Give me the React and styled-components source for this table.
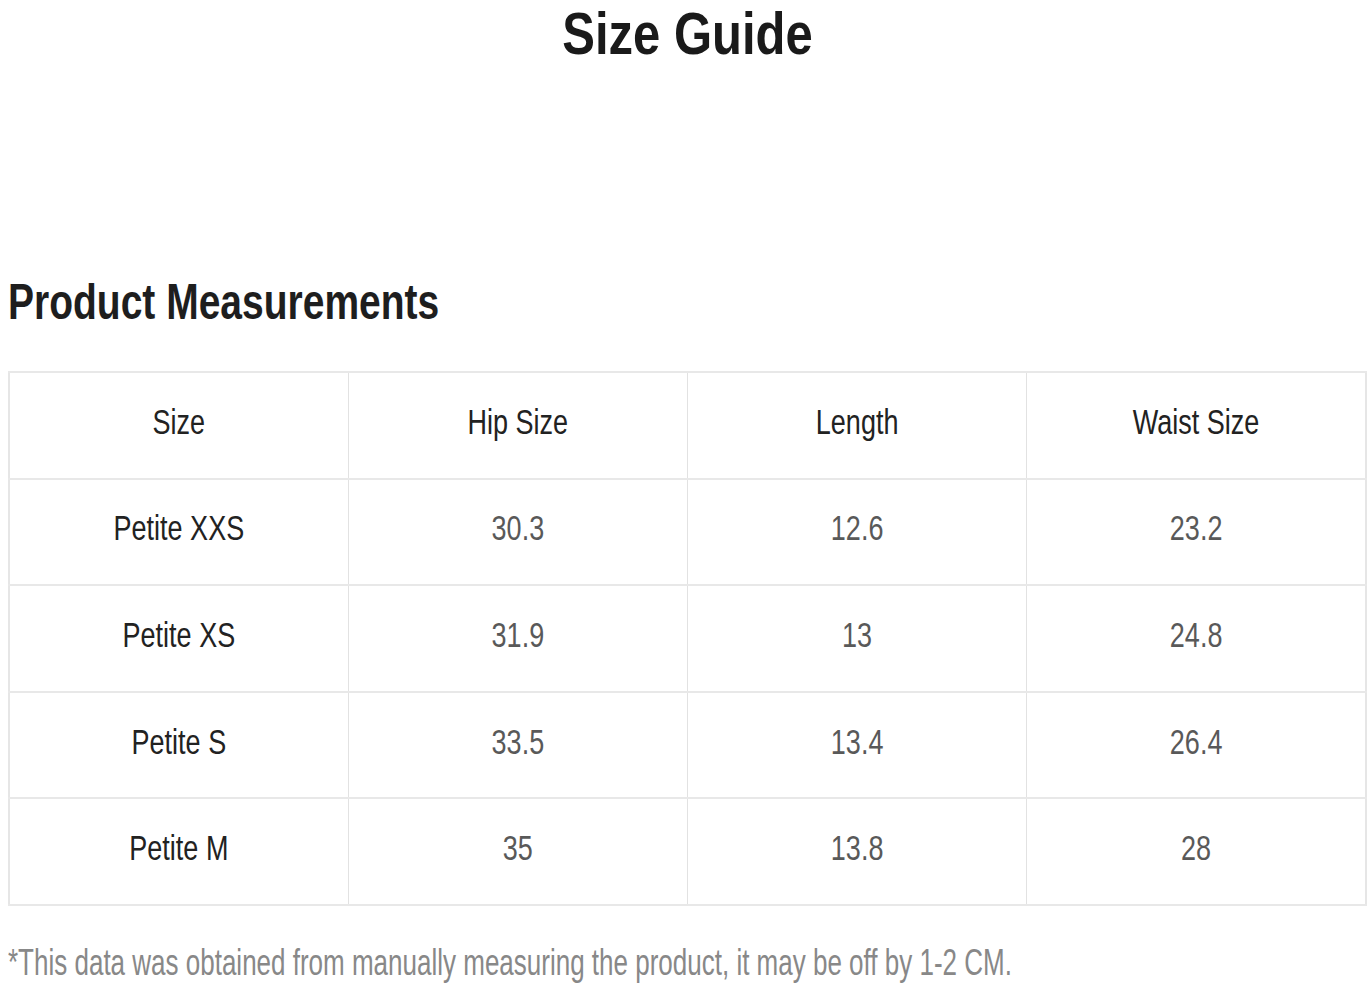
import styled, { createGlobalStyle } from "styled-components";

const GlobalStyle = createGlobalStyle`
  html, body {
    margin: 0;
    padding: 0;
    background: #fff;
  }
  body {
    font-family: "Liberation Sans", Arial, sans-serif;
  }
`;

const Page = styled.div`
  width: 1372px;
  height: 988px;
  overflow: hidden;
  padding: 0 5px 0 8px;
  box-sizing: border-box;
`;

// the source text is drawn tall and narrow, so each label is stretched upward
const Tall = styled.span`
  display: inline-block;
  transform: scaleY(${(p) => p.$k || 1.3});
  transform-origin: 50% 50%;
`;

const Title = styled.h1`
  margin: 10px 0 0;
  font-size: 49px;
  line-height: 49px;
  font-weight: 700;
  color: #1a1a1a;
  text-align: center;
`;

const SectionTitle = styled.h2`
  margin: 223px 0 0;
  font-size: 39px;
  line-height: 39px;
  font-weight: 700;
  color: #1e1e1e;
`;

const Table = styled.table`
  margin-top: 50px;
  width: 1359px;
  border-collapse: collapse;
  table-layout: fixed;
  border: 2px solid #e6e6e6;
`;

const Cell = styled.td`
  height: 106.6px;
  padding: 0 0 6px;
  box-sizing: border-box;
  text-align: center;
  vertical-align: middle;
  font-size: 27px;
  line-height: 27px;
  color: ${(p) => (p.$dark ? "#222" : "#595959")};
  border-top: 2px solid #e8e8e8;
  border-bottom: 2px solid #e8e8e8;
  border-left: 1px solid #e2e2e2;
  border-right: 1px solid #e2e2e2;
`;

const Note = styled.p`
  margin: 43px 0 0;
  font-size: 26px;
  line-height: 26px;
  color: #888;
  white-space: nowrap;
`;

const headers = ["Size", "Hip Size", "Length", "Waist Size"];

const rows = [
  ["Petite XXS", "30.3", "12.6", "23.2"],
  ["Petite XS", "31.9", "13", "24.8"],
  ["Petite S", "33.5", "13.4", "26.4"],
  ["Petite M", "35", "13.8", "28"],
];

export default function App() {
  return (
    <>
      <GlobalStyle />
      <Page>
        <Title>
          <Tall $k={1.2}>Size Guide</Tall>
        </Title>
        <SectionTitle>
          <Tall $k={1.28}>Product Measurements</Tall>
        </SectionTitle>
        <Table>
          <tbody>
            <tr>
              {headers.map((h) => (
                <Cell key={h} $dark>
                  <Tall>{h}</Tall>
                </Cell>
              ))}
            </tr>
            {rows.map((r) => (
              <tr key={r[0]}>
                {r.map((v, i) => (
                  <Cell key={i} $dark={i === 0}>
                    <Tall>{v}</Tall>
                  </Cell>
                ))}
              </tr>
            ))}
          </tbody>
        </Table>
        <Note>
          <Tall $k={1.45}>
            *This data was obtained from manually measuring the product, it may
            be off by 1-2 CM.
          </Tall>
        </Note>
      </Page>
    </>
  );
}
